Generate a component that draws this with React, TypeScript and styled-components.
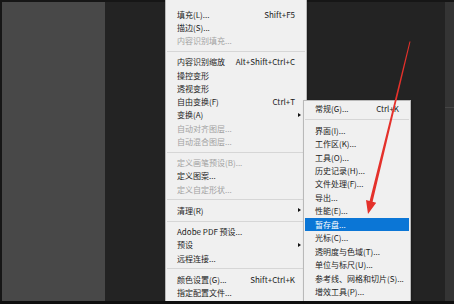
import React from 'react';
import styled, { createGlobalStyle } from 'styled-components';

const GlobalStyle = createGlobalStyle`
  html, body {
    margin: 0;
    padding: 0;
    background: #0f0f0f;
  }
`;

const Frame = styled.div`
  width: 454px;
  height: 304px;
  background: #0f0f0f;
  overflow: hidden;
`;

// dark workspace of the editor behind the menus
const Stage = styled.div`
  position: relative;
  height: 301px;
  display: flex;
  padding: 2px 0 0 2px;
  box-sizing: border-box;
  background: #161616;
  overflow: hidden;
`;

const LeftPanel = styled.div`
  width: 103px;
  background: #484848;
`;

const Canvas = styled.div`
  flex: 1;
  background: #232323;
`;

const RightStrip = styled.div`
  width: 9px;
  background: #343434;
  display: flex;
  flex-direction: column;
  padding-top: 105px;
  box-sizing: border-box;

  &::before {
    content: '';
    height: 1px;
    background: #454545;
  }
`;

const Menu = styled.div<{ $left: number; $top: number; $width: number; $row: number; $sep: number; $padTop: number }>`
  position: absolute;
  left: ${p => p.$left}px;
  top: ${p => p.$top}px;
  width: ${p => p.$width}px;
  bottom: -20px;
  box-sizing: border-box;
  background: #f0f0f0;
  border: 1px solid #b9b9b9;
  padding: ${p => p.$padTop}px 1px 0 1px;
  font-family: 'Noto Sans CJK SC', 'Noto Sans', sans-serif;
  font-size: 8px;
  color: #1c1c1c;
  --row: ${p => p.$row}px;
  --sep: ${p => p.$sep}px;
  box-shadow: 1px 1px 2px rgba(0, 0, 0, 0.25);
`;

const Item = styled.div<{ $disabled?: boolean; $active?: boolean }>`
  display: grid;
  grid-template-columns: 1fr auto 6px;
  align-items: center;
  height: var(--row);
  line-height: var(--row);
  padding: 0 4px 0 10px;
  white-space: nowrap;
  color: ${p => (p.$active ? '#ffffff' : p.$disabled ? '#a2a2a2' : '#1c1c1c')};
  background: ${p => (p.$active ? '#0b76d6' : 'transparent')};
`;

const Shortcut = styled.span`
  text-align: right;
  padding-left: 8px;
`;

const SubArrow = styled.span`
  justify-self: end;
  width: 0;
  height: 0;
  border-top: 2.5px solid transparent;
  border-bottom: 2.5px solid transparent;
  border-left: 3px solid #111;
`;

const Separator = styled.div`
  height: var(--sep);
  display: flex;
  align-items: center;

  &::after {
    content: '';
    flex: 1;
    height: 1px;
    background: #d6d6d6;
  }
`;

const ArrowLayer = styled.svg`
  position: absolute;
  left: 0;
  top: 0;
  width: 454px;
  height: 301px;
  pointer-events: none;
`;

type Entry = { label: string; sc?: string; sub?: boolean; disabled?: boolean; active?: boolean } | 'sep';

const editMenu: Entry[] = [
  { label: '填充(L)...', sc: 'Shift+F5' },
  { label: '描边(S)...' },
  { label: '内容识别填充...', disabled: true },
  'sep',
  { label: '内容识别缩放', sc: 'Alt+Shift+Ctrl+C' },
  { label: '操控变形' },
  { label: '透视变形' },
  { label: '自由变换(F)', sc: 'Ctrl+T' },
  { label: '变换(A)', sub: true },
  { label: '自动对齐图层...', disabled: true },
  { label: '自动混合图层...', disabled: true },
  'sep',
  { label: '定义画笔预设(B)...', disabled: true },
  { label: '定义图案...' },
  { label: '定义自定形状...', disabled: true },
  'sep',
  { label: '清理(R)', sub: true },
  'sep',
  { label: 'Adobe PDF 预设...' },
  { label: '预设', sub: true },
  { label: '远程连接...' },
  'sep',
  { label: '颜色设置(G)...', sc: 'Shift+Ctrl+K' },
  { label: '指定配置文件...' },
];

const prefsMenu: Entry[] = [
  { label: '常规(G)...', sc: 'Ctrl+K' },
  'sep',
  { label: '界面(I)...' },
  { label: '工作区(K)...' },
  { label: '工具(O)...' },
  { label: '历史记录(H)...' },
  { label: '文件处理(F)...' },
  { label: '导出...' },
  { label: '性能(E)...' },
  { label: '暂存盘...', active: true },
  { label: '光标(C)...' },
  { label: '透明度与色域(T)...' },
  { label: '单位与标尺(U)...' },
  { label: '参考线、网格和切片(S)...' },
  { label: '增效工具(P)...' },
];

const MenuItems: React.FC<{ entries: Entry[] }> = ({ entries }) => (
  <>
    {entries.map((e, i) =>
      e === 'sep' ? (
        <Separator key={i} />
      ) : (
        <Item key={i} $disabled={e.disabled} $active={e.active}>
          <span>{e.label}</span>
          <Shortcut>{e.sc}</Shortcut>
          {e.sub ? <SubArrow /> : <span />}
        </Item>
      )
    )}
  </>
);

const App: React.FC = () => {
  return (
    <>
      <GlobalStyle />
      <Frame>
        <Stage>
          <LeftPanel />
          <Canvas />
          <RightStrip />

          <Menu $left={165} $top={-1} $width={142} $row={13.3} $sep={7.8} $padTop={7.6}>
            <MenuItems entries={editMenu} />
          </Menu>

          <Menu $left={303} $top={100} $width={108} $row={13.45} $sep={8.4} $padTop={0.9}>
            <MenuItems entries={prefsMenu} />
          </Menu>

          {/* red annotation arrow pointing at 暂存盘 */}
          <ArrowLayer viewBox="0 0 454 301">
            <polygon
              fill="#e4312b"
              points="409.5,41.4 410.5,41.6 372.6,201.8 376.2,202.7 368,214 366,200.1 369.6,201"
            />
          </ArrowLayer>
        </Stage>
      </Frame>
    </>
  );
};

export default App;
